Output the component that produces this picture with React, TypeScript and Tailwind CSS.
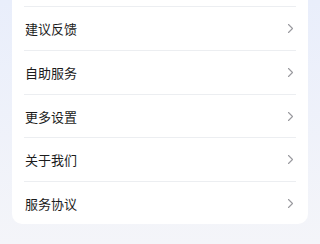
import React from 'react';

const items = [
  { label: '建议反馈', h: 'h-[44px]' },
  { label: '自助服务', h: 'h-[44px]' },
  { label: '更多设置', h: 'h-[43px]' },
  { label: '关于我们', h: 'h-[44px]' },
  { label: '服务协议', h: 'h-[43px]' },
];

const Chevron: React.FC = () => (
  <svg width="7" height="11" viewBox="0 0 7 11" fill="none">
    <path d="M1.5 1.5L5.5 5.5L1.5 9.5" stroke="#9a9a9f" strokeWidth="1.1" strokeLinecap="round" strokeLinejoin="round" />
  </svg>
);

const App: React.FC = () => {
  return (
    <div
      className="w-[320px] h-[244px] overflow-hidden bg-gradient-to-b from-[#e9eefb] to-[#f4f5f9] px-3"
      style={{ fontFamily: '"Noto Sans CJK SC", "Noto Sans", sans-serif' }}
    >
      <div className="bg-white rounded-b-[10px] pt-[6px] px-3">
        {items.map((item) => (
          <div
            key={item.label}
            className={`flex items-center justify-between ${item.h} border-t border-[#eceef1] pl-px pr-[2px]`}
          >
            <span className="text-[13px] text-[#1c1c1c] leading-none">{item.label}</span>
            <Chevron />
          </div>
        ))}
      </div>
    </div>
  );
};

export default App;
